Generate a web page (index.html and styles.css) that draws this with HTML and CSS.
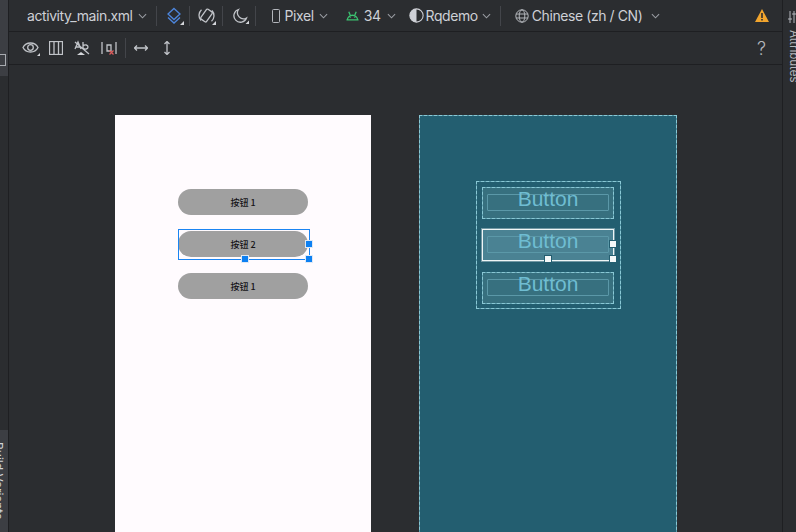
FILE: index.html
```html
<!DOCTYPE html>
<html>
<head>
<meta charset="utf-8">
<title>activity_main.xml</title>
<link rel="stylesheet" href="styles.css">
</head>
<body>
<div class="app">
	<div class="rail-left">
		<div class="rail-tab rail-tab-top"><span class="rail-mark"></span></div>
		<div class="rail-tab rail-tab-bottom"><span class="rail-label-left">Build Variants</span></div>
	</div>

	<div class="main">
		<div class="toolbar">
			<span class="tool file-name">activity_main.xml <svg class="chev" viewBox="0 0 10 6"><path d="M1 1l4 4 4-4"/></svg></span>
			<span class="sep sep-1"></span>
			<svg class="icon ic-layers" viewBox="0 0 18 18"><path d="M8 1.500l6 5.500-6 5.500-6-5.500z"/><path d="M2 10.500l6 5.500 6-5.500"/><path class="corner" d="M18 14v4h-4z"/></svg>
			<span class="sep sep-2"></span>
			<svg class="icon ic-rotate" viewBox="0 0 18 18"><rect x="5" y="2.500" width="7" height="12" rx="1.200" transform="rotate(35 8.500 8.500)"/><path d="M3.500 2.800A7.500 7.500 0 0 0 3 13.500M13.500 14.200A7.500 7.500 0 0 0 14 3.500"/><path class="corner" d="M18 14v4h-4z"/></svg>
			<span class="sep sep-3"></span>
			<svg class="icon ic-moon" viewBox="0 0 16 16"><path d="M5.500 1.500a6.500 6.500 0 1 0 8 8.500 6 6 0 0 1-8-8.500z"/><path class="corner" d="M16 12.500V16h-3.500z"/></svg>
			<span class="sep sep-4"></span>
			<span class="tool tool-pixel">
				<svg class="ic-phone" viewBox="0 0 8 14"><rect x=".5" y=".5" width="7" height="13" rx="1"/></svg>
				Pixel <svg class="chev" viewBox="0 0 10 6"><path d="M1 1l4 4 4-4"/></svg>
			</span>
			<span class="tool tool-api">
				<svg class="ic-android" viewBox="0 0 14 10"><path d="M.5 9.200h13M1.500 9.200a5.500 5 0 0 1 11 0M3 .5l1.500 3.500M11 .5L9.500 4M4 6.500h1M9 6.500h1"/></svg>
				34 <svg class="chev" viewBox="0 0 10 6"><path d="M1 1l4 4 4-4"/></svg>
			</span>
			<span class="tool tool-theme">
				<svg class="ic-theme" viewBox="0 0 14 14"><circle cx="7" cy="7" r="6.200"/><path class="fill" d="M7 .8a6.200 6.200 0 0 0 0 12.400z"/></svg>
				Rqdemo <svg class="chev" viewBox="0 0 10 6"><path d="M1 1l4 4 4-4"/></svg>
			</span>
			<span class="sep sep-5"></span>
			<span class="tool tool-locale">
				<svg class="ic-globe" viewBox="0 0 14 14"><circle cx="7" cy="7" r="6.200"/><ellipse cx="7" cy="7" rx="2.800" ry="6.200"/><path d="M1 5h12M1 9h12"/></svg>
				Chinese (zh / CN) <svg class="chev" viewBox="0 0 10 6"><path d="M1 1l4 4 4-4"/></svg>
			</span>
			<svg class="ic-warn" viewBox="0 0 14 13"><path class="warn-bg" d="M7 0l7 13H0z"/><path class="warn-mark" d="M6.200 4h1.600v5H6.200zM6.200 10h1.600v1.600H6.200z"/></svg>
		</div>

		<div class="subbar">
			<svg class="icon ic-eye" viewBox="0 0 18 15"><path d="M1 6.500c3-6 12-6 15 0-3 6-12 6-15 0z"/><circle cx="8.500" cy="6.500" r="2.800"/><path class="corner" d="M18 12v3h-3z"/></svg>
			<svg class="icon ic-cols" viewBox="0 0 14 14"><rect x=".5" y=".5" width="13" height="13"/><path d="M5 .5v13M9.500.5v13"/></svg>
			<svg class="icon ic-ab" viewBox="0 0 16 16"><path d="M1 9l3-7 3 7M2 7h4M9 2v7M9 6c2-2 5-1 5 1s-3 3-5 1M1 2l14 12"/><path class="corner" d="M3 15l4-3 4 3z"/></svg>
			<svg class="icon ic-margin" viewBox="0 0 16 16"><path d="M1 2v12M15 2v12M6 5h4v6H6z"/><path class="red" d="M8.500 10.500l4 4M12.500 10.500l-4 4"/></svg>
			<span class="sep sep-sub"></span>
			<svg class="icon ic-hor" viewBox="0 0 14 8"><path d="M0.500 4h13M3 1.500L.5 4 3 6.500M11 1.500L13.500 4 11 6.500"/></svg>
			<svg class="icon ic-ver" viewBox="0 0 8 14"><path d="M4 .5v13M1.500 3L4 .5 6.500 3M1.500 11L4 13.500 6.500 11"/></svg>
			<span class="help">?</span>
		</div>

		<div class="canvas">
			<div class="phone">
				<div class="btn">按钮 1</div>
				<div class="btn btn-selected">按钮 2
					<span class="select-box"></span>
					<span class="handle handle-right"></span>
					<span class="handle handle-bottom"></span>
					<span class="handle handle-corner"></span>
				</div>
				<div class="btn">按钮 1</div>
			</div>

			<div class="blueprint">
				<div class="bp-group">
					<div class="bp-btn"><span class="bp-inner"></span><span class="bp-text">Button</span></div>
					<div class="bp-btn bp-selected"><span class="bp-inner"></span><span class="bp-text">Button</span>
						<span class="handle handle-right"></span>
						<span class="handle handle-bottom"></span>
						<span class="handle handle-corner"></span>
					</div>
					<div class="bp-btn bp-last"><span class="bp-inner"></span><span class="bp-text">Button</span></div>
				</div>
			</div>
		</div>
	</div>

	<div class="rail-right">
		<svg class="ic-sliders" viewBox="0 0 12 12"><path d="M2 0v12M6 0v12M10 0v12M0 8h4M4 3h4M8 8h4"/></svg>
		<span class="rail-label-right">Attributes</span>
	</div>
</div>
</body>
</html>
```

FILE: styles.css
```css
html, body {
	margin: 0;
	height: 100%;
	overflow: hidden;
	background: #2b2d30;
	font-family: Inter, "Liberation Sans", sans-serif;
}

.app {
	display: flex;
	width: 796px;
	height: 532px;
	overflow: hidden;
}

/* side rails */

.rail-left {
	width: 9px;
	flex: none;
	box-sizing: border-box;
	display: flex;
	flex-direction: column;
	justify-content: space-between;
	border-right: 1px solid #1e1f22;
	overflow: hidden;
}

.rail-tab {
	background: #3c3e43;
	overflow: hidden;
}

.rail-tab-top {
	height: 76px;
	display: flex;
	align-items: flex-end;
}

.rail-mark {
	display: block;
	width: 5px;
	height: 10px;
	margin-bottom: 10px;
	border: 1px solid #a8abb0;
	border-left: none;
}

.rail-tab-bottom {
	height: 102px;
	position: relative;
}

.rail-label-left {
	position: absolute;
	left: -9px;
	top: 12px;
	writing-mode: vertical-rl;
	font-size: 12px;
	color: #d0d3d8;
	white-space: nowrap;
}

.rail-right {
	width: 14px;
	flex: none;
	box-sizing: border-box;
	border-left: 1px solid #1e1f22;
	display: flex;
	flex-direction: column;
	align-items: flex-start;
	gap: 7px;
	padding-top: 11px;
	overflow: hidden;
}

.ic-sliders {
	width: 12px;
	height: 12px;
	margin-left: 5px;
	flex: none;
	fill: none;
	stroke: #b4b7bc;
	stroke-width: 1;
}

.rail-label-right {
	writing-mode: vertical-rl;
	font-size: 11.5px;
	color: #b4b7bc;
	white-space: nowrap;
	margin-left: 4px;
}

/* toolbars */

.main {
	flex: 1;
	display: flex;
	flex-direction: column;
	min-width: 0;
}

.toolbar {
	height: 31px;
	flex: none;
	display: flex;
	align-items: center;
	border-bottom: 1px solid #1e1f22;
	color: #ced0d6;
	font-size: 14px;
	letter-spacing: -0.42px;
}

.subbar {
	height: 32px;
	flex: none;
	display: flex;
	align-items: center;
	border-bottom: 1px solid #1e1f22;
}

.tool {
	display: flex;
	align-items: center;
	gap: 5px;
	white-space: nowrap;
}

.chev {
	width: 9px;
	height: 6px;
	fill: none;
	stroke: #9a9da3;
	stroke-width: 1.2;
	flex: none;
}

.sep {
	width: 1px;
	height: 20px;
	background: #43454a;
	flex: none;
}

.icon {
	flex: none;
	fill: none;
	stroke: #c0c3c8;
	stroke-width: 1.3;
}

.icon .corner {
	fill: #d4d6da;
	stroke: none;
}

.file-name { margin-left: 18px; }
.sep-1 { margin-left: 9px; }
.ic-layers { width: 18px; height: 18px; margin-left: 9px; stroke: #4d86dd; }
.sep-2 { margin-left: 5px; }
.ic-rotate { width: 18px; height: 18px; margin-left: 8px; }
.sep-3 { margin-left: 6px; }
.ic-moon { width: 16px; height: 16px; margin-left: 10px; }
.sep-4 { margin-left: 6px; }

.tool-pixel { margin-left: 16px; gap: 4px; }
.tool-pixel .chev { margin-left: 1px; }
.ic-phone { width: 8px; height: 14px; fill: none; stroke: #b4b7bc; stroke-width: 1; margin-right: 1px; }

.tool-api { margin-left: 18px; gap: 5px; }
.tool-api .chev { margin-left: 1px; }
.ic-android { width: 13px; height: 10px; fill: none; stroke: #3cc471; stroke-width: 1.4; }

.tool-theme { margin-left: 13px; gap: 2px; }
.tool-theme .chev { margin-left: 2px; }
.ic-theme { width: 15px; height: 15px; fill: none; stroke: #ced0d6; stroke-width: 1; }
.ic-theme .fill { fill: #ced0d6; stroke: none; }

.sep-5 { margin-left: 9px; }

.tool-locale { margin-left: 14px; gap: 3px; }
.tool-locale .chev { margin-left: 6px; }
.ic-globe { width: 14px; height: 14px; fill: none; stroke: #b4b7bc; stroke-width: 1; }

.ic-warn {
	width: 14px;
	height: 13px;
	margin-left: auto;
	margin-right: 13px;
}
.warn-bg { fill: #f2a52d; }
.warn-mark { fill: #2b2d30; }

.ic-eye { width: 18px; height: 15px; margin-left: 13px; }
.ic-cols { width: 14px; height: 14px; margin-left: 9px; }
.ic-ab { width: 16px; height: 16px; margin-left: 11px; }
.ic-margin { width: 16px; height: 16px; margin-left: 11px; }
.ic-margin .red { stroke: #db5c5c; }
.sep-sub { margin-left: 8px; }
.ic-hor { width: 14px; height: 8px; margin-left: 8px; }
.ic-ver { width: 8px; height: 14px; margin-left: 15px; }

.help {
	margin-left: auto;
	margin-right: 16px;
	font-size: 18px;
	font-weight: 300;
	color: #b4b7bc;
}

/* design surface */

.canvas {
	flex: 1;
	display: flex;
	gap: 48px;
	padding: 50px 0 0 106px;
	overflow: hidden;
}

.phone {
	width: 256px;
	height: 440px;
	flex: none;
	background: #fffbfe;
	display: flex;
	flex-direction: column;
	gap: 16px;
	padding: 74px 0 0 63px;
	box-sizing: border-box;
}

.btn {
	width: 130px;
	height: 26px;
	border-radius: 13px;
	background: #a0a0a0;
	color: #141316;
	font-family: "Noto Sans CJK SC", "Liberation Sans", sans-serif;
	font-size: 9px;
	font-weight: 500;
	display: flex;
	align-items: center;
	justify-content: center;
	position: relative;
}

.select-box {
	position: absolute;
	left: 0;
	top: -2px;
	width: 132px;
	height: 31px;
	box-sizing: border-box;
	border: 1px solid #1a84f2;
}

.handle {
	position: absolute;
	width: 6px;
	height: 6px;
	background: #0d80f2;
	border: 1px solid #dfe9f5;
}

.handle-right { left: 127px; top: 9px; }
.handle-bottom { left: 63px; top: 24px; }
.handle-corner { left: 127px; top: 24px; }

.blueprint {
	width: 258px;
	height: 440px;
	flex: none;
	box-sizing: border-box;
	background: #235e70;
	border: 1px dashed #a6d6e1;
	outline: 1px solid rgba(120, 190, 205, 0.6);
	outline-offset: -1px;
	padding: 65px 0 0 56px;
}

.bp-group {
	width: 145px;
	height: 128px;
	box-sizing: border-box;
	border: 1px dashed #a6d6e1;
	outline: 1px solid rgba(120, 190, 205, 0.6);
	outline-offset: -1px;
	padding: 5px 0 0 5px;
	display: flex;
	flex-direction: column;
	gap: 10px;
}

.bp-btn {
	width: 132px;
	height: 32px;
	box-sizing: border-box;
	border: 1px dashed #a6d6e1;
	outline: 1px solid rgba(120, 190, 205, 0.6);
	outline-offset: -1px;
	background: #37707f;
	position: relative;
	display: flex;
	align-items: center;
	justify-content: center;
}

.bp-last {
	margin-top: 1px;
}

.bp-inner {
	position: absolute;
	left: 4px;
	top: 6px;
	width: 122px;
	height: 17px;
	box-sizing: border-box;
	border: 1px solid #5b98a8;
	border-radius: 1px;
}

.bp-text {
	font-family: "Liberation Sans", sans-serif;
	font-size: 21px;
	line-height: 26px;
	color: #6fbdd2;
	position: relative;
	top: -4px;
}

.bp-selected {
	background: #4a8293;
	border: 1px solid #eef5f6;
	outline: 1px solid rgba(230, 240, 242, 0.4);
	outline-offset: 0;
}

.bp-selected .handle {
	background: #f4f8f9;
	border: 1px solid #235e70;
}

.bp-selected .handle-right { left: 126px; top: 10px; }
.bp-selected .handle-bottom { left: 61px; top: 25px; }
.bp-selected .handle-corner { left: 126px; top: 25px; }
```
